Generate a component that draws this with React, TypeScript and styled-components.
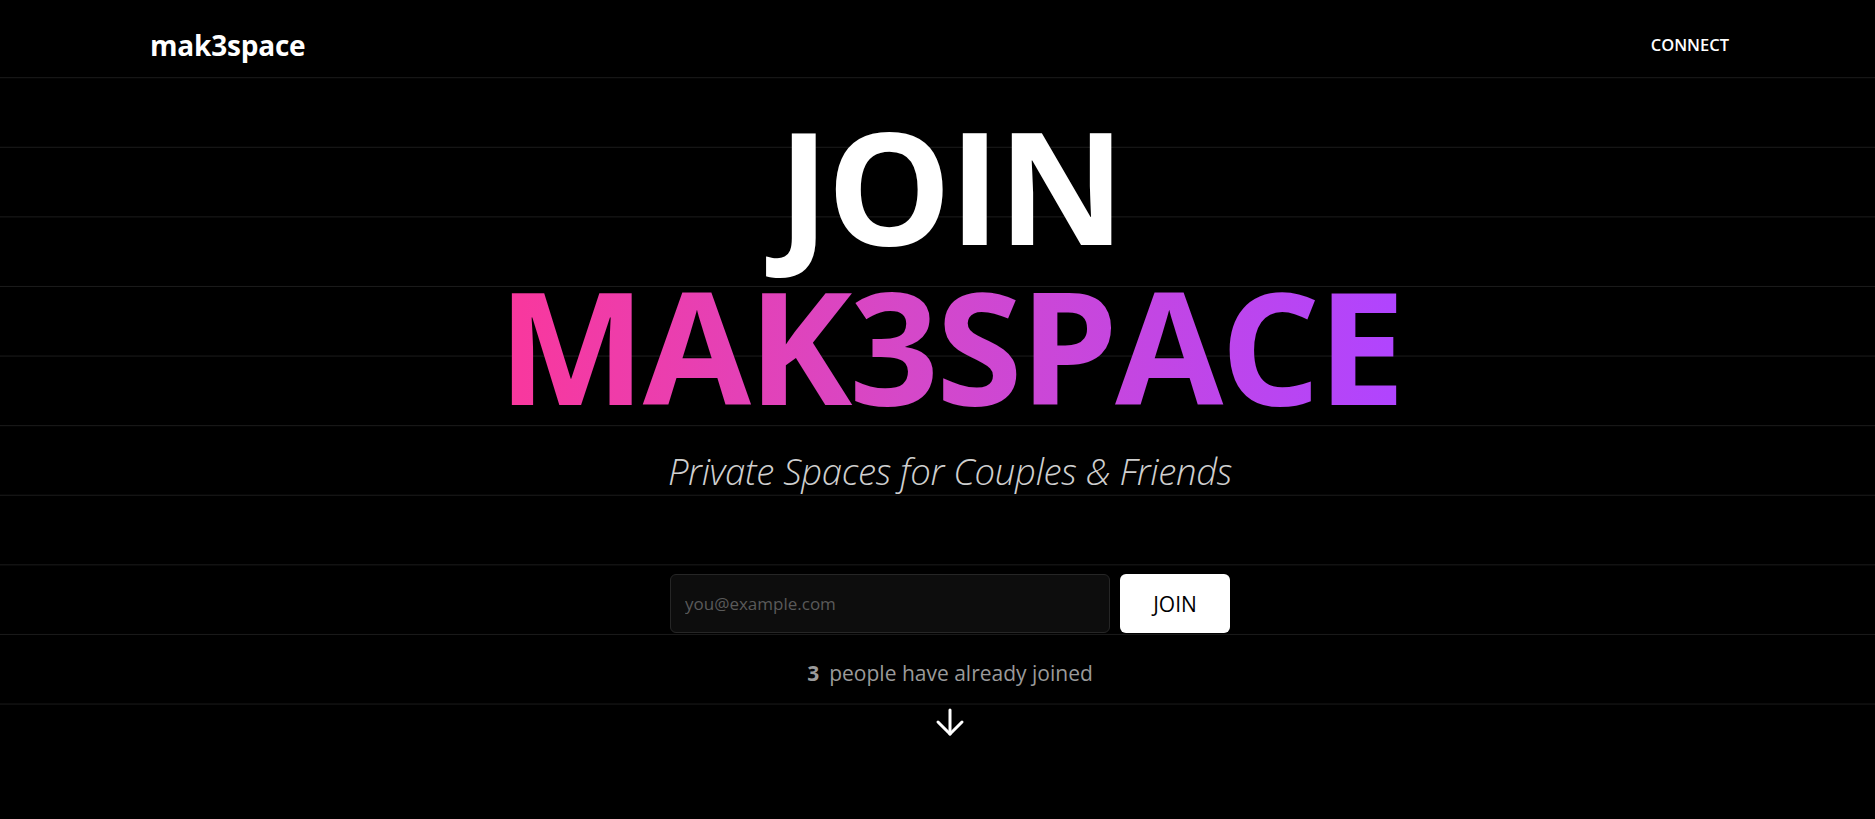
import React from "react";
import styled, { createGlobalStyle } from "styled-components";

const Global = createGlobalStyle`
  html, body { margin: 0; padding: 0; background: #000; }
  body { font-family: "Open Sans", "Noto Sans", sans-serif; color: #fff; }
  * { box-sizing: border-box; }
`;

const Page = styled.div`
  min-height: 819px;
  background-color: #000;
  background-image:
    linear-gradient(to bottom, transparent 740px, #000 740px),
    linear-gradient(to bottom, transparent calc(100% - 1px), #1b1b1b calc(100% - 1px));
  background-size: 100% 100%, 100% 69.6px;
  background-position: 0 0, 0 8.6px;
  display: flex;
  flex-direction: column;
`;

const Header = styled.header`
  display: flex;
  align-items: center;
  justify-content: space-between;
  height: 76px;
  padding: 15px 146px 0 150px;
  background: #000;
`;

const Logo = styled.div`
  font-size: 28px;
  font-weight: 700;
  letter-spacing: -0.2px;
  color: #fff;
  padding-bottom: 2px;
`;

const NavLink = styled.a`
  font-size: 16.5px;
  font-weight: 600;
  color: #fff;
  text-decoration: none;
  margin-bottom: 3px;
`;

const Main = styled.main`
  display: flex;
  flex-direction: column;
  align-items: center;
  padding-left: 25px;
  padding-top: 28px;
`;

const Title = styled.h1`
  margin: 0;
  font-size: 157px;
  font-weight: 700;
  line-height: 160px;
  letter-spacing: -3px;
  text-align: center;
`;

const TitleLine = styled.span<{ $gradient?: boolean }>`
  display: block;
  color: #fff;
  ${(p) =>
    p.$gradient &&
    `
    background: linear-gradient(90deg, #fa379c 0%, #d548c8 45%, #b044ff 100%);
    -webkit-background-clip: text;
    background-clip: text;
    color: transparent;
  `}
`;

const Subtitle = styled.p`
  margin: 22px 0 0;
  font-size: 36.5px;
  font-weight: 300;
  font-style: italic;
  color: #cfcfcf;
  letter-spacing: -0.3px;
`;

const Form = styled.form`
  display: flex;
  gap: 10px;
  margin-top: 78px;
`;

const EmailInput = styled.input`
  width: 440px;
  height: 59px;
  background: #0d0d0d;
  border: 1px solid #262626;
  border-radius: 6px;
  padding: 0 14px;
  font-family: "Open Sans", sans-serif;
  font-size: 17px;
  color: #fff;
  outline: none;
  &::placeholder { color: #5a5a5a; }
`;

const JoinButton = styled.button`
  width: 110px;
  height: 59px;
  background: #fff;
  color: #000;
  border: none;
  border-radius: 6px;
  font-family: "Open Sans", sans-serif;
  font-size: 21px;
  font-weight: 500;
  cursor: pointer;
`;

const Count = styled.p`
  margin: 26px 0 0;
  font-size: 21px;
  color: #9a9a9a;
  b { font-weight: 700; margin-right: 10px; }
`;

const ArrowIcon = styled.svg`
  margin-top: 20px;
  width: 30px;
  height: 30px;
`;

export default function App() {
  return (
    <>
      <Global />
      <Page>
        <Header>
          <Logo>mak3space</Logo>
          <NavLink href="#">CONNECT</NavLink>
        </Header>
        <Main>
          <Title>
            <TitleLine>JOIN</TitleLine>
            <TitleLine $gradient>MAK3SPACE</TitleLine>
          </Title>
          <Subtitle>Private Spaces for Couples &amp; Friends</Subtitle>
          <Form onSubmit={(e) => e.preventDefault()}>
            <EmailInput type="email" placeholder="you@example.com" />
            <JoinButton type="submit">JOIN</JoinButton>
          </Form>
          <Count>
            <b>3</b>people have already joined
          </Count>
          <ArrowIcon viewBox="0 0 30 30" fill="none" stroke="#fff" strokeWidth="3" strokeLinecap="round" strokeLinejoin="round">
            <path d="M15 3v24" />
            <path d="M3 15l12 12 12-12" />
          </ArrowIcon>
        </Main>
      </Page>
    </>
  );
}
